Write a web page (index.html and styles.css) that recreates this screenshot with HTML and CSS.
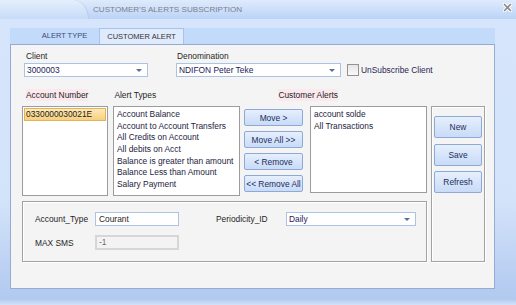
FILE: index.html
```html
<!DOCTYPE html>
<html lang="en">
<head>
  <meta charset="UTF-8" />
  <title>Customer's Alerts Subscription</title>
  <link rel="stylesheet" href="styles.css">
</head>
<body>
  <div class="window">
    <div class="titlebar">
      <div class="app-button"></div>
      <div class="title">CUSTOMER'S ALERTS SUBSCRIPTION</div>
      <svg class="close" width="9" height="9" viewBox="0 0 9 9">
        <path d="M1 1 L8 8 M8 1 L1 8" stroke="#ffffff" stroke-width="3.4" stroke-linecap="square"/>
        <path d="M1 1 L8 8 M8 1 L1 8" stroke="#8c8c8c" stroke-width="1.6"/>
      </svg>
    </div>

    <div class="frame">
      <div class="tabs">
        <div class="tab">ALERT TYPE</div>
        <div class="tab active">CUSTOMER ALERT</div>
      </div>

      <div class="panel">
        <!-- client / denomination -->
        <div class="top-row">
          <div class="field client">
            <label>Client</label>
            <div class="combo">3000003<span class="arrow"></span></div>
          </div>
          <div class="field denom">
            <label>Denomination</label>
            <div class="combo">NDIFON Peter Teke<span class="arrow"></span></div>
          </div>
          <label class="check"><span class="box"></span>UnSubscribe Client</label>
        </div>

        <div class="heads">
          <span class="head acc pink">Account Number</span>
          <span class="head types">Alert Types</span>
          <span class="head pink">Customer Alerts</span>
        </div>

        <div class="main">
          <div class="left-col">
            <div class="lists">
              <ul class="listbox accounts">
                <li class="selected">0330000030021E</li>
              </ul>
              <ul class="listbox alert-types">
                <li>Account Balance</li>
                <li>Account to Account Transfers</li>
                <li>All Credits on Account</li>
                <li>All debits on Acct</li>
                <li>Balance is greater than amount</li>
                <li>Balance Less than Amount</li>
                <li>Salary Payment</li>
              </ul>
              <div class="move-buttons">
                <button class="btn">Move &gt;</button>
                <button class="btn">Move All &gt;&gt;</button>
                <button class="btn">&lt; Remove</button>
                <button class="btn">&lt;&lt; Remove All</button>
              </div>
              <ul class="listbox customer-alerts">
                <li>account solde</li>
                <li>All Transactions</li>
              </ul>
            </div>

            <div class="group details">
              <div class="row">
                <span class="lbl">Account_Type</span>
                <div class="input">Courant</div>
                <span class="lbl period">Periodicity_ID</span>
                <div class="combo period-combo">Daily<span class="arrow"></span></div>
              </div>
              <div class="row">
                <span class="lbl">MAX SMS</span>
                <div class="input disabled">-1</div>
              </div>
            </div>
          </div>

          <div class="group actions">
            <button class="btn big">New</button>
            <button class="btn big">Save</button>
            <button class="btn big">Refresh</button>
          </div>
        </div>
      </div>
    </div>
  </div>
</body>
</html>
```

FILE: styles.css
```css
body {
  margin: 0;
  font-family: "Liberation Sans", Arial, sans-serif;
  font-size: 8.4px;
  color: #1f1f1f;
}
.window {
  width: 516px;
  height: 305px;
  overflow: hidden;
  background: linear-gradient(#d6e5fb 0, #d3e3fa 200px, #b4cbf0 292px, #b2caef 299px, #d2e2f8 305px);
}

/* title bar */
.titlebar {
  height: 19px;
  display: flex;
  align-items: center;
  background: linear-gradient(#dfeafc, #bad4f7);
}
.app-button {
  width: 88px;
  height: 19px;
  border-top-right-radius: 16px 19px;
  border-right: 1px solid #b4cbed;
  background: linear-gradient(#e6effc, #c6dbf8);
}
.title {
  margin-left: 4px;
  font-size: 8.1px;
  color: #7d7f8c;
}
.close {
  margin-left: auto;
  margin-right: 4px;
  margin-top: -4px;
}

/* tabs + panel */
.frame {
  padding: 9px 21px 0 10px;
}
.tabs {
  display: flex;
  height: 16px;
  background: #c2dbfa;
}
.tab {
  width: 89px;
  box-sizing: border-box;
  padding-left: 20px;
  text-align: center;
  line-height: 16px;
  font-size: 7.5px;
  color: #3c4c7c;
}
.tab.active {
  width: 85px;
  padding-left: 0;
  background: #dfebfc;
  border: 1px solid #a9c3e6;
  border-bottom: none;
  line-height: 15px;
  color: #333;
}
.panel {
  height: 245px;
  box-sizing: border-box;
  background: #f4f4f4;
  border: 1px solid #94acd2;
  padding: 5px 0 0 11px;
}

.top-row {
  display: flex;
  align-items: flex-end;
}
.field label {
  display: block;
  line-height: 12px;
  padding-left: 2px;
  margin-bottom: 1px;
}
.client {
  margin-left: 2px;
  width: 124px;
}
.denom {
  margin-left: 28px;
  width: 165px;
}
.denom label {
  padding-left: 1px;
}
.combo {
  position: relative;
  height: 14px;
  box-sizing: border-box;
  background: #fff;
  border: 1px solid #abc4e6;
  padding-left: 2px;
  line-height: 12px;
  color: #24225a;
}
.arrow {
  position: absolute;
  right: 5px;
  top: 5px;
  border-left: 3px solid transparent;
  border-right: 3px solid transparent;
  border-top: 3px solid #55709c;
}
.check {
  display: flex;
  align-items: center;
  margin-left: 6px;
  height: 14px;
  color: #2c1e55;
}
.box {
  width: 10px;
  height: 10px;
  margin-right: 2px;
  border: 1px solid #929292;
  background: linear-gradient(#e6e6e6, #fafafa);
}

.heads {
  display: flex;
  margin-top: 12px;
  line-height: 12px;
}
.head.acc {
  margin-left: 4px;
  width: 89px;
}
.head.types {
  width: 164px;
}
.pink {
  background: #fbe9ee;
}
.head.acc.pink {
  width: auto;
  margin-right: 26px;
}

.main {
  display: flex;
  margin-top: 5px;
}
.left-col {
  width: 405px;
}
.lists {
  display: flex;
  height: 90px;
}
.listbox {
  margin: 0;
  padding: 2px 0 0 2px;
  list-style: none;
  background: #fff;
  border: 1px solid #9c9c9c;
  box-sizing: border-box;
  color: #1e1c40;
}
.listbox li {
  line-height: 11.67px;
  padding-left: 1px;
}
.accounts {
  width: 86px;
  padding: 1px;
}
.accounts .selected {
  line-height: 11px;
  background: linear-gradient(#fdeab8, #f8cf7c);
  border: 1px solid #e2b25a;
  padding-left: 1px;
  color: #222;
}
.alert-types {
  width: 127px;
  margin-left: 5px;
}
.move-buttons {
  width: 59px;
  margin-left: 4px;
  padding-top: 3px;
  display: flex;
  flex-direction: column;
  gap: 5px;
}
.customer-alerts {
  width: 117px;
  margin-left: 7px;
  height: 87px;
}

.btn {
  height: 17px;
  padding: 0;
  font-family: inherit;
  font-size: 8.4px;
  color: #1d2c5c;
  background: linear-gradient(#e6effd, #c8dbf7);
  border: 1px solid #8ea9d6;
  border-radius: 2px;
}
.btn.big {
  width: 48px;
  height: 22px;
}

.group {
  box-sizing: border-box;
  border: 1px solid #a2a2a2;
  box-shadow: inset 1px 1px 0 #fff, 1px 1px 0 #fff;
}
.details {
  margin-top: 5px;
  height: 61px;
  padding: 10px 0 0 12px;
}
.row {
  display: flex;
  align-items: center;
  margin-bottom: 9px;
}
.lbl {
  width: 60px;
}
.lbl.period {
  margin-left: 37px;
  width: 70px;
}
.input {
  width: 84px;
  height: 14px;
  box-sizing: border-box;
  background: #fff;
  border: 1px solid #abc4e6;
  padding-left: 3px;
  line-height: 12px;
}
.input.disabled {
  height: 15px;
  border: 2px solid #d6d6d6;
  background: #f3f3f3;
  color: #6a6a7a;
  padding-left: 2px;
  line-height: 11px;
}
.period-combo {
  width: 130px;
}

.actions {
  width: 54px;
  height: 156px;
  margin-left: 4px;
  padding: 9px 0 0 2px;
  display: flex;
  flex-direction: column;
  gap: 5.5px;
}
```
